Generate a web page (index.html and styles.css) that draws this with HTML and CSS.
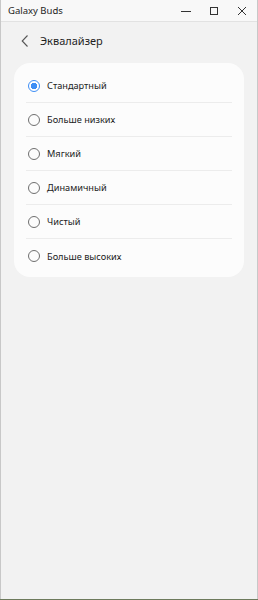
FILE: index.html
```html
<!DOCTYPE html>
<html lang="ru">
<head>
<meta charset="utf-8">
<link rel="stylesheet" href="styles.css">
</head>
<body>
<div class="window">
  <div class="titlebar">
    <span class="title">Galaxy Buds</span>
    <div class="controls">
      <span class="ctl"><svg width="10" height="10" viewBox="0 0 10 10"><path d="M0 5.5H10" stroke="#333" stroke-width="1"/></svg></span>
      <span class="ctl"><svg width="10" height="10" viewBox="0 0 10 10"><rect x="1.5" y="1.5" width="7" height="7" fill="none" stroke="#333" stroke-width="1"/></svg></span>
      <span class="ctl"><svg width="10" height="10" viewBox="0 0 10 10"><path d="M1 1L9 9M9 1L1 9" stroke="#333" stroke-width="1"/></svg></span>
    </div>
  </div>
  <div class="content">
    <div class="header">
      <svg class="back" width="8" height="12" viewBox="0 0 8 12"><path d="M6.5 0.5L1.2 6L6.5 11.5" fill="none" stroke="#555" stroke-width="1.1"/></svg>
      <span class="header-title">Эквалайзер</span>
    </div>
    <div class="card">
      <div class="row"><span class="radio selected"></span><span class="label">Стандартный</span></div>
      <div class="row"><span class="radio"></span><span class="label">Больше низких</span></div>
      <div class="row"><span class="radio"></span><span class="label">Мягкий</span></div>
      <div class="row"><span class="radio"></span><span class="label">Динамичный</span></div>
      <div class="row"><span class="radio"></span><span class="label">Чистый</span></div>
      <div class="row"><span class="radio"></span><span class="label">Больше высоких</span></div>
    </div>
  </div>
</div>
</body>
</html>
```
FILE: styles.css
```css
* { box-sizing: border-box; }
html, body {
  margin: 0;
  padding: 0;
  height: 100%;
}
body {
  background: #6d7a5c;
  font-family: "Noto Sans", "Open Sans", sans-serif;
  color: #1f1f1f;
}
.window {
  width: 258px;
  height: 599px;
  background: #f2f2f2;
  border-left: 1px solid #c8c8c8;
  border-right: 1px solid #c8c8c8;
  display: flex;
  flex-direction: column;
}
.titlebar {
  height: 22px;
  flex: none;
  display: flex;
  align-items: center;
  justify-content: space-between;
  background: #f8f8f8;
  border-bottom: 1px solid #e2e2e2;
  padding-left: 7px;
}
.title {
  font-size: 9.5px;
  color: #222;
}
.controls {
  display: flex;
  height: 100%;
  padding-right: 1px;
}
.ctl {
  width: 28px;
  height: 100%;
  display: flex;
  align-items: center;
  justify-content: center;
}
.content {
  flex: 1;
  padding: 0 13px;
}
.header {
  height: 37px;
  display: flex;
  align-items: center;
  padding-left: 7px;
}
.back { margin-right: 11px; }
.header-title {
  font-size: 11px;
  color: #1f1f1f;
}
.card {
  margin-top: 4px;
  background: #fcfcfc;
  border-radius: 16px;
  padding: 6px 12px 4px 12px;
  display: flex;
  flex-direction: column;
}
.row {
  height: 34px;
  flex: none;
  display: flex;
  align-items: center;
  border-bottom: 1px solid #ececec;
  padding-left: 2px;
}
.row:last-child { border-bottom: none; }
.radio {
  width: 12px;
  height: 12px;
  border-radius: 50%;
  border: 1px solid #6f6f6f;
  margin-right: 7px;
  flex: none;
}
.radio.selected {
  border: 1.5px solid #3d8ef5;
  background: radial-gradient(circle, #3d8ef5 0 3px, #ffffff 3.3px);
}
.label {
  font-size: 9.2px;
  color: #222;
}
```
